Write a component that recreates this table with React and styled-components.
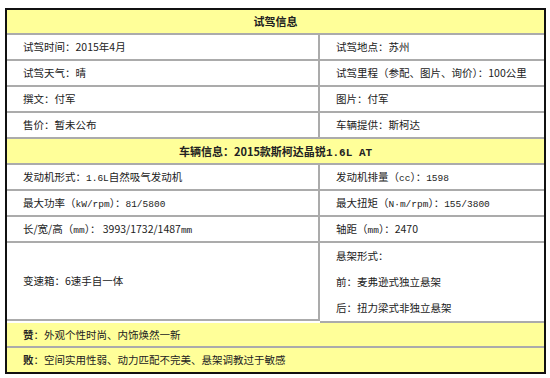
import styled, { createGlobalStyle } from 'styled-components';

const GlobalStyle = createGlobalStyle`
  html, body {
    margin: 0;
    padding: 0;
    background: #fff;
  }
  body {
    font-family: "Noto Sans CJK SC", "Liberation Sans", sans-serif;
    color: #222;
  }
`

const Page = styled.div`
  padding: 8px 4px 0 5px;
  width: 550px;
  box-sizing: border-box;
`

const Table = styled.div`
  display: grid;
  grid-template-columns: 313px 1fr;
  width: 541px;
  box-sizing: border-box;
  border: 2px solid #111;
  background: #fff;
`

const Cell = styled.div`
  height: ${p => p.$h || 24}px;
  line-height: ${p => p.$h || 24}px;
  padding-left: 16px;
  border-bottom: 2px solid #ababab;
  font-size: 10.5px;
  white-space: nowrap;
  overflow: hidden;
  ${p => p.$left && 'border-right: 2px solid #ababab;'}
  ${p => p.$last && 'border-bottom: none;'}
`

const Header = styled(Cell)`
  grid-column: 1 / -1;
  text-align: center;
  padding-left: 0;
  background: #ffff99;
  font-weight: bold;
  font-size: 11px;
`

const Note = styled(Cell)`
  grid-column: 1 / -1;
  background: #ffff99;
`

const Stack = styled.div`
  padding: 0 0 0 16px;
  border-bottom: 2px solid #ababab;
  font-size: 10.5px;
  white-space: nowrap;
`

const Line = styled.div`
  height: 26px;
  line-height: 26px;
`

const Mono = styled.span`
  font-family: "Liberation Mono", monospace;
  font-size: ${p => p.$size || 9.5}px;
  font-weight: ${p => (p.$bold ? 'bold' : 'normal')};
`

const Strong = styled.b`
  font-weight: bold;
`

const pairs = [
  [<>试驾时间：2015年4月</>, <>试驾地点：苏州</>],
  [<>试驾天气：晴</>, <>试驾里程（参配、图片、询价）：100公里</>],
  [<>撰文：付军</>, <>图片：付军</>],
  [<>售价：暂未公布</>, <>车辆提供：斯柯达</>],
]

const specs = [
  [
    <>发动机形式：<Mono>1.6L</Mono>自然吸气发动机</>,
    <>发动机排量（<Mono>cc</Mono>）：<Mono>1598</Mono></>,
  ],
  [
    <>最大功率（<Mono>kW/rpm</Mono>）：<Mono>81/5800</Mono></>,
    <>最大扭矩（<Mono>N·m/rpm</Mono>）：<Mono>155/3800</Mono></>,
  ],
  [
    <>长/宽/高（<Mono>mm</Mono>）： 3993/1732/1487<Mono>mm</Mono></>,
    <>轴距（<Mono>mm</Mono>）：2470</>,
  ],
]

const App = () => {
  return (
    <>
      <GlobalStyle />
      <Page>
        <Table>
          <Header $h={23}>试驾信息</Header>
          {pairs.map(([a, b], i) => [
            <Cell $left key={`a${i}`}>{a}</Cell>,
            <Cell key={`b${i}`}>{b}</Cell>,
          ])}

          <Header>
            车辆信息：2015款斯柯达晶锐<Mono $bold $size={11}>1.6L AT</Mono>
          </Header>
          {specs.map(([a, b], i) => [
            <Cell $left key={`c${i}`}>{a}</Cell>,
            <Cell key={`d${i}`}>{b}</Cell>,
          ])}

          <Cell $left $h={76}>变速箱：6速手自一体</Cell>
          <Stack>
            <Line>悬架形式：</Line>
            <Line>前：麦弗逊式独立悬架</Line>
            <Line>后：扭力梁式非独立悬架</Line>
          </Stack>

          <Note $h={23}><Strong>赞</Strong>：外观个性时尚、内饰焕然一新</Note>
          <Note $h={24} $last><Strong>败</Strong>：空间实用性弱、动力匹配不完美、悬架调教过于敏感</Note>
        </Table>
      </Page>
    </>
  )
}

export default App;
